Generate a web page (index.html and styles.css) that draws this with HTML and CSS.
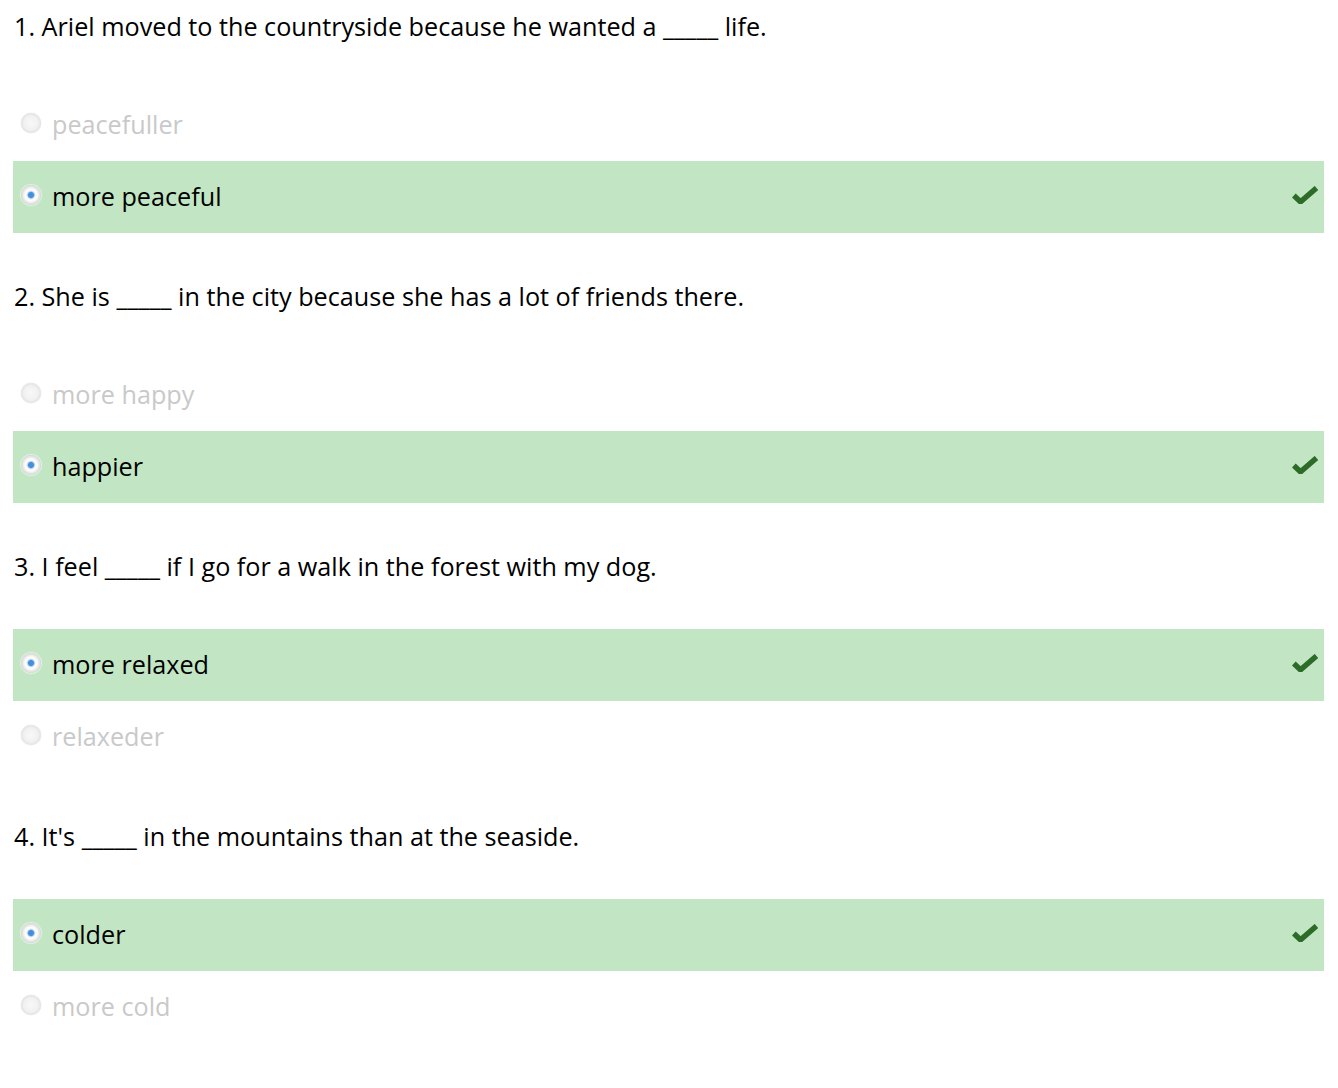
FILE: index.html
```html
<!DOCTYPE html>
<html lang="en">
<head>
<meta charset="utf-8">
<title>Quiz</title>
<link rel="stylesheet" href="styles.css">
</head>
<body>
<div class="quiz">
  <div class="question">
    <div class="qtext">1. Ariel moved to the countryside because he wanted a _____ life.</div>
    <div class="options">
      <div class="option"><span class="radio"></span><span class="label">peacefuller</span></div>
      <div class="option correct"><span class="radio checked"></span><span class="label">more peaceful</span><svg class="tick" viewBox="0 0 26 18" width="26" height="18"><path d="M1.8 9.5 L8.5 15.8 L24.5 2" fill="none" stroke="#2d6b28" stroke-width="5.5" stroke-linejoin="miter"/></svg></div>
    </div>
  </div>
  <div class="question">
    <div class="qtext">2. She is _____ in the city because she has a lot of friends there.</div>
    <div class="options">
      <div class="option"><span class="radio"></span><span class="label">more happy</span></div>
      <div class="option correct"><span class="radio checked"></span><span class="label">happier</span><svg class="tick" viewBox="0 0 26 18" width="26" height="18"><path d="M1.8 9.5 L8.5 15.8 L24.5 2" fill="none" stroke="#2d6b28" stroke-width="5.5" stroke-linejoin="miter"/></svg></div>
    </div>
  </div>
  <div class="question">
    <div class="qtext">3. I feel _____ if I go for a walk in the forest with my dog.</div>
    <div class="options">
      <div class="option correct"><span class="radio checked"></span><span class="label">more relaxed</span><svg class="tick" viewBox="0 0 26 18" width="26" height="18"><path d="M1.8 9.5 L8.5 15.8 L24.5 2" fill="none" stroke="#2d6b28" stroke-width="5.5" stroke-linejoin="miter"/></svg></div>
      <div class="option"><span class="radio"></span><span class="label">relaxeder</span></div>
    </div>
  </div>
  <div class="question">
    <div class="qtext">4. It's _____ in the mountains than at the seaside.</div>
    <div class="options">
      <div class="option correct"><span class="radio checked"></span><span class="label">colder</span><svg class="tick" viewBox="0 0 26 18" width="26" height="18"><path d="M1.8 9.5 L8.5 15.8 L24.5 2" fill="none" stroke="#2d6b28" stroke-width="5.5" stroke-linejoin="miter"/></svg></div>
      <div class="option"><span class="radio"></span><span class="label">more cold</span></div>
    </div>
  </div>
</div>
</body>
</html>
```

FILE: styles.css
```css
html, body {
  margin: 0;
  padding: 0;
  background: #ffffff;
}
body {
  font-family: "Open Sans", "Liberation Sans", sans-serif;
  font-size: 25.2px;
  color: #000;
}
.quiz {
  padding: 0 14px 0 13px;
}
.question {
  margin-bottom: 37px;
}
.qtext {
  height: 54px;
  line-height: 52px;
  padding-left: 1px;
  margin-bottom: 35px;
  white-space: nowrap;
}
.options {
  display: flex;
  flex-direction: column;
}
.option {
  height: 72px;
  display: flex;
  align-items: center;
  padding-left: 8px;
  padding-right: 6px;
}
.option.correct {
  background: #c2e6c4;
}
.radio {
  width: 20px;
  height: 20px;
  border-radius: 50%;
  flex: none;
  margin-right: 11px;
  margin-top: -4px;
  box-sizing: border-box;
  background: radial-gradient(circle at 50% 50%, #f8f8f8 0, #f1f1f1 50%, #dcdcdc 78%, #c6c6c6 100%);
  box-shadow: 0 0 1px 0 rgba(160,160,160,0.6);
}
.radio.checked {
  background: radial-gradient(circle at 50% 50%, #3c8ddc 0, #4893dd 2.6px, #dfe9f3 3.9px, #ffffff 5px, #f8f8f8 6.5px, #e4e4e4 8.5px, #d6d6d6 10px);
  box-shadow: 0 0 1px 1px rgba(255,255,255,0.5);
}
.label {
  color: #c9c9c9;
  line-height: 1;
}
.correct .label {
  color: #000;
}
.tick {
  margin-left: auto;
  display: block;
  margin-top: -4px;
}
```
